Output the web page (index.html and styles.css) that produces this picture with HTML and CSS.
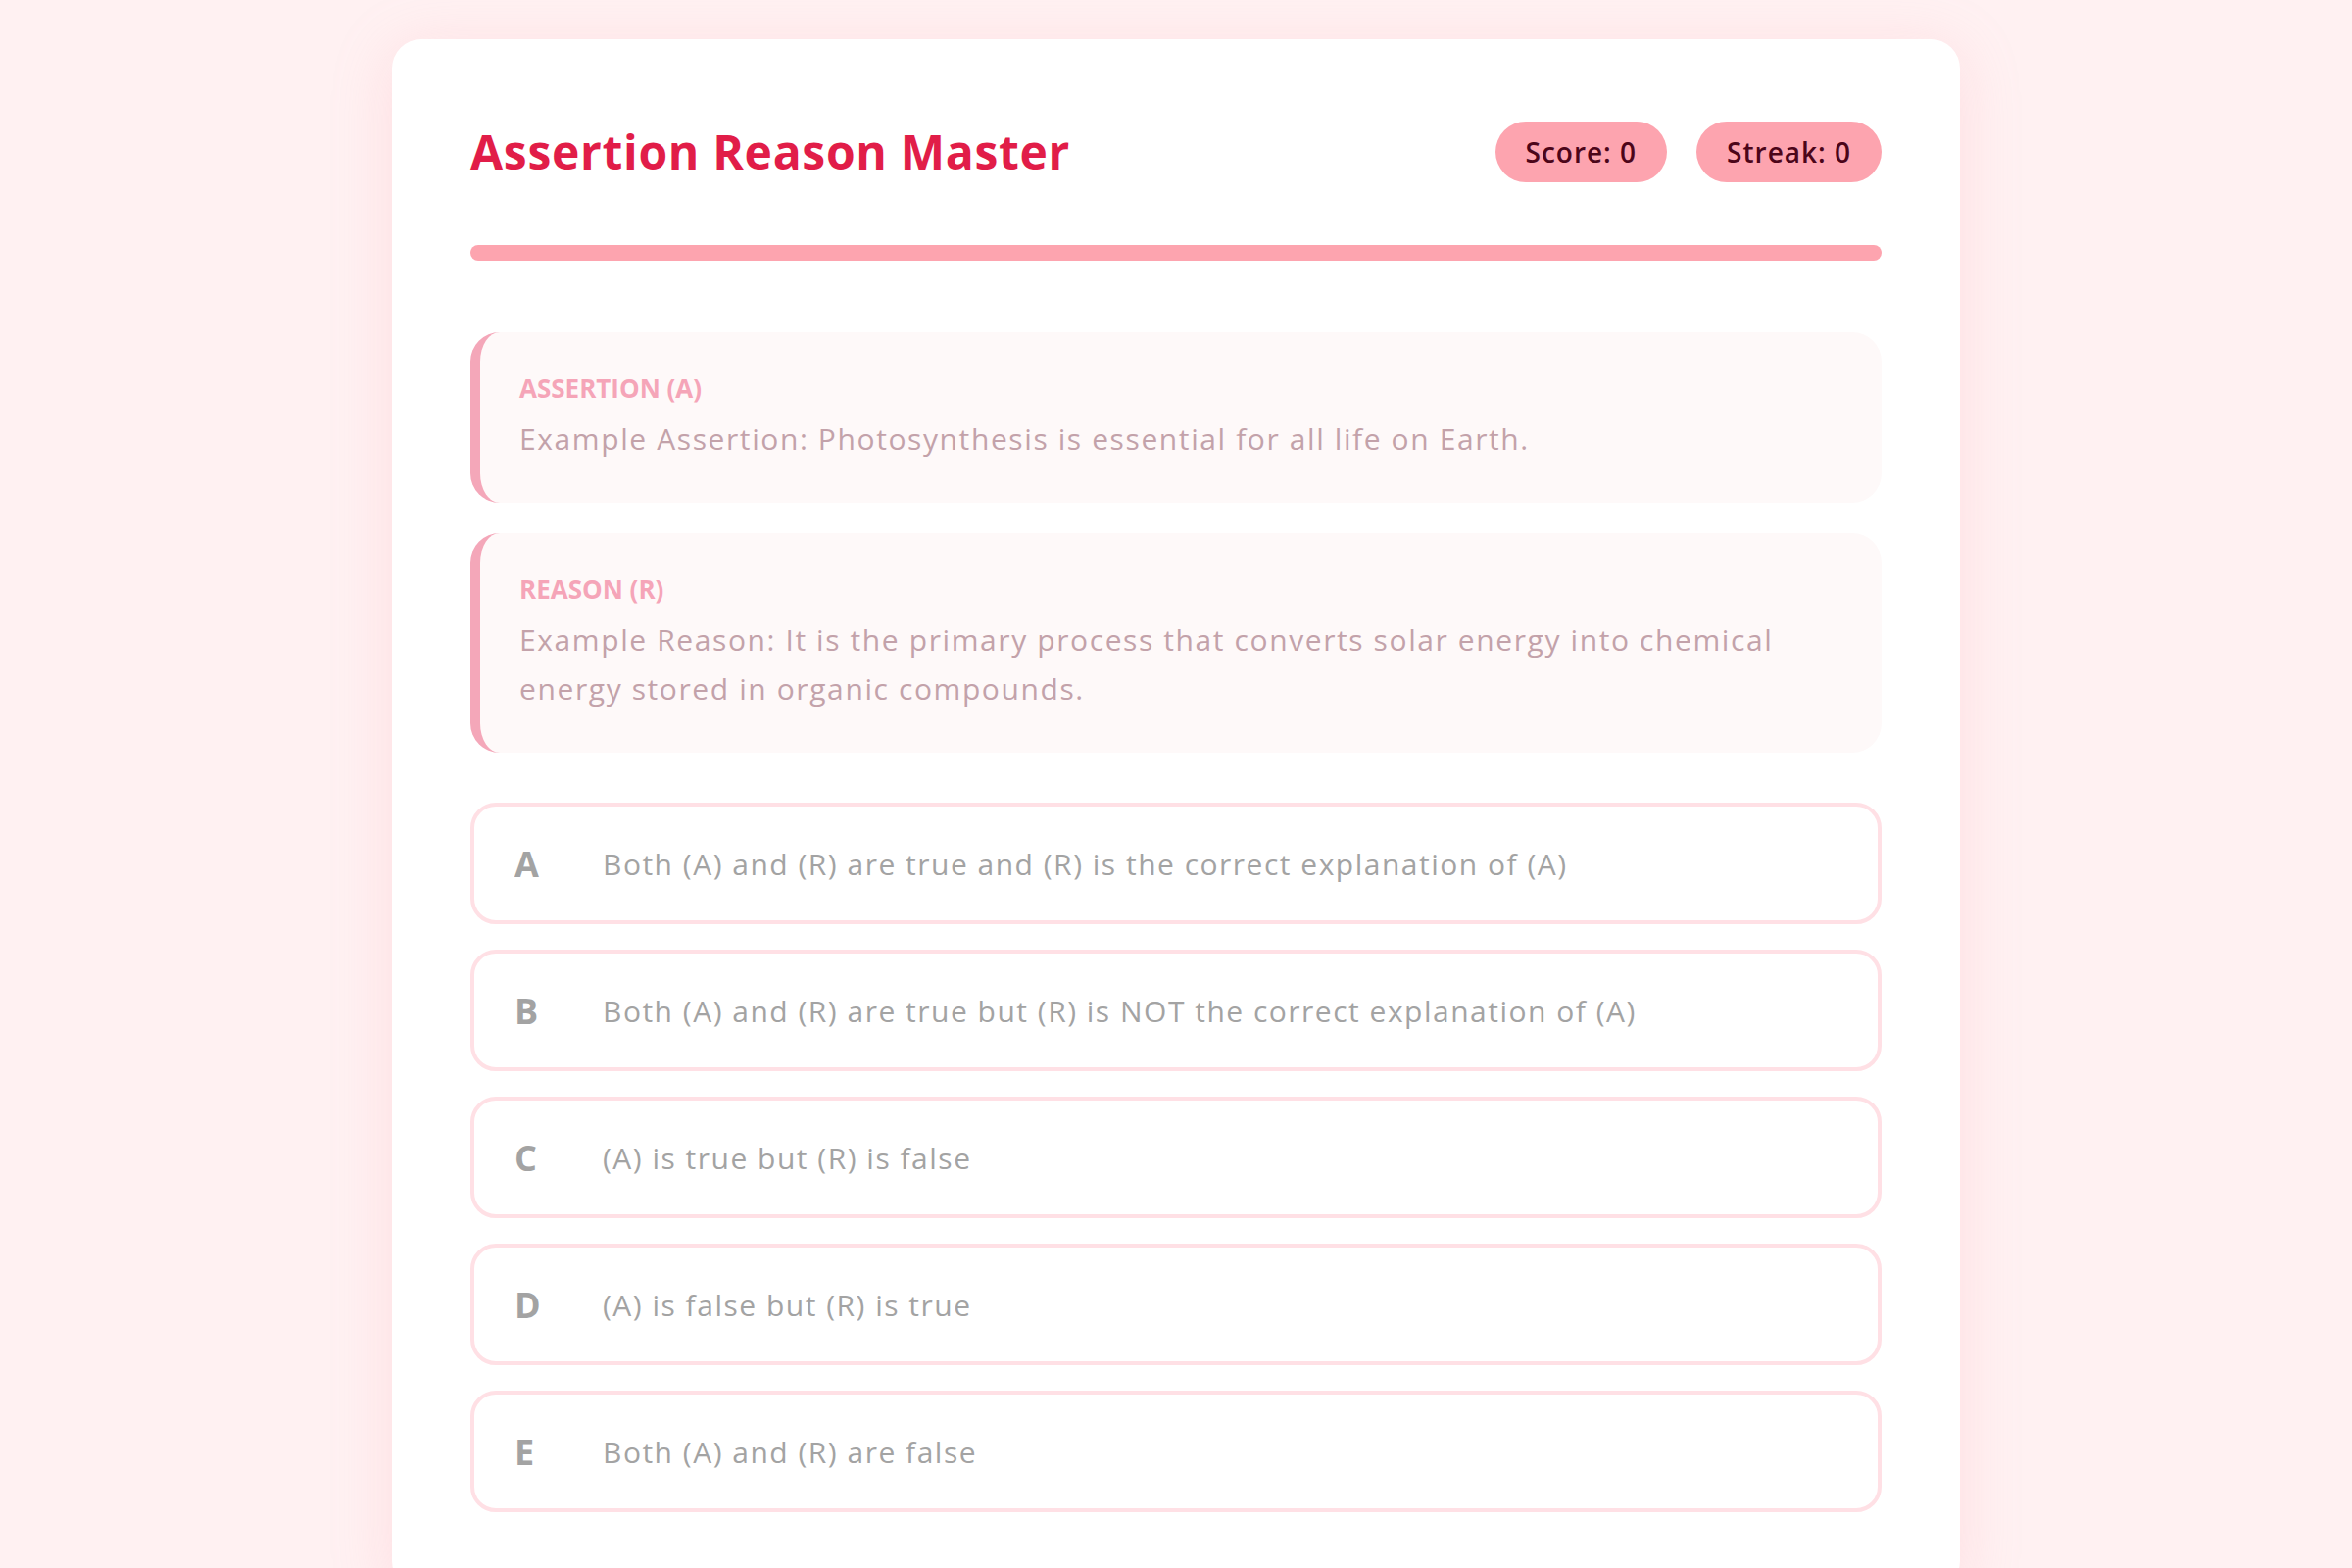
FILE: index.html
```html
<!DOCTYPE html>
<html lang="en">
<head>
  <meta charset="UTF-8">
  <meta name="viewport" content="width=device-width, initial-scale=1.0">
  <title>Assertion Reason Master</title>
  <link rel="stylesheet" href="styles.css">
</head>
<body>
  <div class="quiz-card">
    <div class="quiz-header">
      <h1>Assertion Reason Master</h1>
      <div class="stats">
        <span class="badge" id="score">Score: 0</span>
        <span class="badge" id="streak">Streak: 0</span>
      </div>
    </div>

    <div class="progress-container">
      <div class="progress-bar" id="progress-bar" style="width: 100%"></div>
    </div>

    <div class="statements">
      <div class="statement">
        <div class="statement-label">Assertion (A)</div>
        <div class="statement-text" id="assertion">Example Assertion: Photosynthesis is essential for all life on Earth.</div>
      </div>
      <div class="statement">
        <div class="statement-label">Reason (R)</div>
        <div class="statement-text" id="reason">Example Reason: It is the primary process that converts solar energy into chemical energy stored in organic compounds.</div>
      </div>
    </div>

    <div class="options">
      <div class="option">
        <span class="option-letter">A</span>
        <span class="option-text">Both (A) and (R) are true and (R) is the correct explanation of (A)</span>
      </div>
      <div class="option">
        <span class="option-letter">B</span>
        <span class="option-text">Both (A) and (R) are true but (R) is NOT the correct explanation of (A)</span>
      </div>
      <div class="option">
        <span class="option-letter">C</span>
        <span class="option-text">(A) is true but (R) is false</span>
      </div>
      <div class="option">
        <span class="option-letter">D</span>
        <span class="option-text">(A) is false but (R) is true</span>
      </div>
      <div class="option">
        <span class="option-letter">E</span>
        <span class="option-text">Both (A) and (R) are false</span>
      </div>
    </div>
  </div>
</body>
</html>
```

FILE: styles.css
```css
* {
  margin: 0;
  padding: 0;
  box-sizing: border-box;
}

body {
  background: #fff1f2;
  font-family: 'Open Sans', sans-serif;
  padding-top: 40px;
}

.quiz-card {
  width: 1600px;
  margin: 0 auto;
  background: #fff;
  border-radius: 30px;
  padding: 84px 80px 80px;
  box-shadow: 0 10px 60px rgba(253, 164, 175, 0.25);
}

.quiz-header {
  display: flex;
  justify-content: space-between;
  align-items: center;
  margin-bottom: 64px;
}

h1 {
  font-size: 48px;
  line-height: 1.2;
  font-weight: 700;
  letter-spacing: 0.7px;
  color: #e11d48;
}

.stats {
  display: flex;
  gap: 30px;
}

.badge {
  display: flex;
  align-items: center;
  height: 62px;
  padding: 0 31px;
  border-radius: 31px;
  background: #fda4af;
  color: #4c0519;
  font-size: 28px;
  font-weight: 600;
  letter-spacing: 1px;
}

.progress-container {
  height: 16px;
  background: #ffe4e6;
  border-radius: 8px;
  overflow: hidden;
  margin-bottom: 73px;
}

.progress-bar {
  height: 100%;
  background: #fda4af;
}

.statements {
  display: flex;
  flex-direction: column;
  gap: 31px;
}

.statement {
  background: #fef9f9;
  border-left: 10px solid #f4a7b9;
  border-radius: 30px;
  padding: 40px;
}

.statement-label {
  font-size: 26px;
  font-weight: 700;
  text-transform: uppercase;
  color: #f5a5b8;
  line-height: 34px;
  margin-bottom: 10px;
}

.statement-text {
  font-size: 30px;
  line-height: 50px;
  letter-spacing: 1.6px;
  color: #c3a2aa;
}

.options {
  display: flex;
  flex-direction: column;
  gap: 26px;
  margin-top: 51px;
}

.option {
  display: flex;
  align-items: center;
  height: 124px;
  padding: 0 41px;
  border: 4px solid #ffe0e5;
  border-radius: 26px;
}

.option-letter {
  width: 50px;
  margin-right: 40px;
  font-size: 36px;
  font-weight: 700;
  color: #a3a3a3;
}

.option-text {
  font-size: 30px;
  letter-spacing: 1.5px;
  color: #a3a3a3;
}
```
